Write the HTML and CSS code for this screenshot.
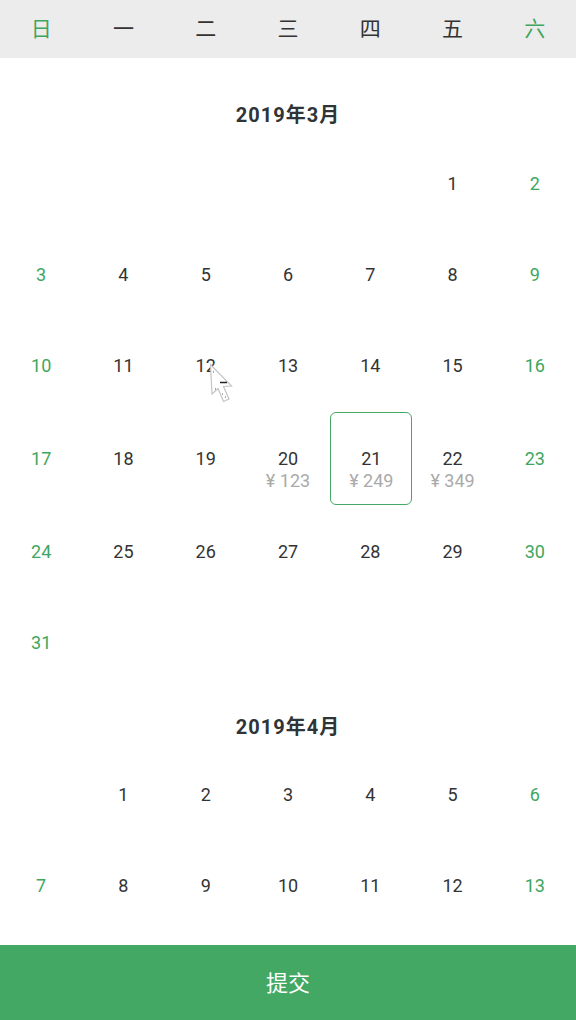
FILE: index.html
```html
<!DOCTYPE html>
<html lang="zh">
<head>
<meta charset="utf-8">
<link rel="stylesheet" href="styles.css">
</head>
<body>
<div class="page">
  <div class="weekbar">
    <span class="wk weekend">日</span><span class="wk">一</span><span class="wk">二</span><span class="wk">三</span><span class="wk">四</span><span class="wk">五</span><span class="wk weekend">六</span>
  </div>
  <div class="scroll">
    <section class="month first">
      <h2 class="mtitle">2019年3月</h2>
      <div class="grid">
        <div class="cell"></div><div class="cell"></div><div class="cell"></div><div class="cell"></div><div class="cell"></div>
        <div class="cell"><span class="num">1</span></div>
        <div class="cell weekend"><span class="num">2</span></div>
        <div class="cell weekend"><span class="num">3</span></div>
        <div class="cell"><span class="num">4</span></div>
        <div class="cell"><span class="num">5</span></div>
        <div class="cell"><span class="num">6</span></div>
        <div class="cell"><span class="num">7</span></div>
        <div class="cell"><span class="num">8</span></div>
        <div class="cell weekend"><span class="num">9</span></div>
        <div class="cell weekend"><span class="num">10</span></div>
        <div class="cell"><span class="num">11</span></div>
        <div class="cell"><span class="num">12</span>
          <svg class="cursor" width="24" height="40" viewBox="0 0 24 40"><path d="M1.5 1.5 L3 31 L9 25.5 L14.5 38.5 L20 36 L14.5 23.5 L22.5 23 Z" fill="#fff" stroke="#c4c4c4" stroke-width="1.2"/><path d="M11 19.5 H18" stroke="#222" stroke-width="1.5"/><path d="M6 26 h1 M13 31 h1 M16 34 h1 M4 9 h1" stroke="#555" stroke-width="1"/></svg>
        </div>
        <div class="cell"><span class="num">13</span></div>
        <div class="cell"><span class="num">14</span></div>
        <div class="cell"><span class="num">15</span></div>
        <div class="cell weekend"><span class="num">16</span></div>
        <div class="cell weekend"><span class="num">17</span></div>
        <div class="cell"><span class="num">18</span></div>
        <div class="cell"><span class="num">19</span></div>
        <div class="cell"><span class="num">20</span><span class="price">¥ 123</span></div>
        <div class="cell selected"><span class="num">21</span><span class="price">¥ 249</span></div>
        <div class="cell"><span class="num">22</span><span class="price">¥ 349</span></div>
        <div class="cell weekend"><span class="num">23</span></div>
        <div class="cell weekend"><span class="num">24</span></div>
        <div class="cell"><span class="num">25</span></div>
        <div class="cell"><span class="num">26</span></div>
        <div class="cell"><span class="num">27</span></div>
        <div class="cell"><span class="num">28</span></div>
        <div class="cell"><span class="num">29</span></div>
        <div class="cell weekend"><span class="num">30</span></div>
        <div class="cell weekend"><span class="num">31</span></div>
      </div>
    </section>
    <section class="month">
      <h2 class="mtitle">2019年4月</h2>
      <div class="grid">
        <div class="cell"></div>
        <div class="cell"><span class="num">1</span></div>
        <div class="cell"><span class="num">2</span></div>
        <div class="cell"><span class="num">3</span></div>
        <div class="cell"><span class="num">4</span></div>
        <div class="cell"><span class="num">5</span></div>
        <div class="cell weekend"><span class="num">6</span></div>
        <div class="cell weekend"><span class="num">7</span></div>
        <div class="cell"><span class="num">8</span></div>
        <div class="cell"><span class="num">9</span></div>
        <div class="cell"><span class="num">10</span></div>
        <div class="cell"><span class="num">11</span></div>
        <div class="cell"><span class="num">12</span></div>
        <div class="cell weekend"><span class="num">13</span></div>
      </div>
    </section>
  </div>
  <button class="submit">提交</button>
</div>
</body>
</html>
```
FILE: styles.css
```css
* { box-sizing: border-box; }
html, body { margin: 0; padding: 0; }
body {
  font-family: Roboto, "Noto Sans CJK SC", sans-serif;
  color: #333;
  background: #fff;
}
.page {
  width: 576px;
  height: 1020px;
  display: flex;
  flex-direction: column;
  overflow: hidden;
}
.weekbar {
  height: 58px;
  flex: none;
  background: #ececec;
  display: grid;
  grid-template-columns: repeat(7, 1fr);
  align-items: center;
  padding-bottom: 4px;
}
.wk {
  text-align: center;
  font-size: 21px;
  line-height: 28px;
  color: #333;
  font-family: "Noto Sans CJK SC", sans-serif;
}
.wk.weekend { color: #3fa65f; }
.scroll {
  flex: 1;
  overflow: hidden;
}
.month.first { padding-top: 19px; }
.mtitle {
  margin: 0;
  height: 61px;
  padding-top: 27px;
  text-align: center;
  font-size: 20px;
  letter-spacing: 1px;
  font-weight: bold;
  line-height: 24px;
  color: #2f3437;
  font-family: Roboto, "Noto Sans CJK SC", sans-serif;
}
.month.first .mtitle { padding-top: 26px; }
.grid {
  display: grid;
  grid-template-columns: repeat(7, 1fr);
  grid-auto-rows: minmax(91px, auto);
}
.cell {
  position: relative;
  display: flex;
  flex-direction: column;
  align-items: center;
  justify-content: center;
  font-size: 18px;
}
.cell .num { line-height: 22px; color: #333; }
.cell.weekend .num { color: #3fa65f; }
.price {
  position: absolute;
  left: 0; right: 0;
  top: calc(50% + 12px);
  text-align: center;
  font-size: 18px;
  color: #aaa;
  line-height: 20px;
}
.cell.selected {
  height: 93px;
  margin: 1px -1px 1px 1px;
  border: 1.5px solid #45a965;
  border-radius: 6px;
}
.cursor {
  position: absolute;
  left: 44px;
  top: 43px;
}
.submit {
  flex: none;
  height: 75px;
  border: 0;
  margin: 0;
  padding: 0 0 4px;
  background: #43a864;
  color: #fff;
  font-size: 22px;
  font-family: "Noto Sans CJK SC", sans-serif;
  width: 100%;
}
```
